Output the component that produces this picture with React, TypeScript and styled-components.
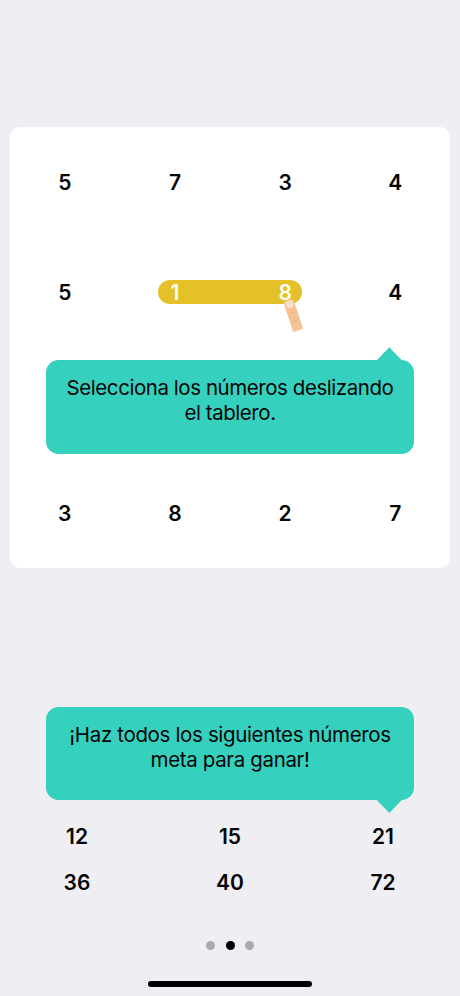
import React from 'react';
import styled, { createGlobalStyle } from 'styled-components';

const GlobalStyle = createGlobalStyle`
  * { box-sizing: border-box; }
  body { margin: 0; background: #efeef3; }
`;

const Screen = styled.main`
  display: flex;
  flex-direction: column;
  width: 460px;
  height: 996px;
  padding-top: 126.5px;
  overflow: hidden;
  background: #efeef3;
  color: #050507;
  font-family: Inter, 'Liberation Sans', sans-serif;
`;

const Board = styled.section`
  position: relative;
  display: grid;
  grid-template-columns: repeat(4, 1fr);
  grid-template-rows: repeat(4, 1fr);
  flex: none;
  width: 440.7px;
  height: 441.5px;
  margin-left: 9.7px;
  border-radius: 10px;
  background: #fff;
`;

const Cell = styled.div<{ $row: number; $col: number; $selected?: boolean }>`
  position: relative;
  grid-row: ${(p) => p.$row};
  grid-column: ${(p) => p.$col};
  display: flex;
  align-items: center;
  justify-content: center;
  padding-top: 1.5px;
  font-size: 21px;
  font-weight: 600;
  line-height: 25px;
  color: ${(p) => (p.$selected ? '#fffdf4' : 'inherit')};
`;

const Selection = styled.div`
  grid-row: 2;
  grid-column: 2 / 4;
  align-self: center;
  justify-self: center;
  width: 144px;
  height: 24.5px;
  border-radius: 13px;
  background: #e4c029;
`;

const Finger = styled.svg`
  position: absolute;
  left: 271px;
  top: 169.5px;
  width: 24px;
  height: 38px;
`;

const Bubble = styled.div<{ $arrow: 'up' | 'down' }>`
  position: relative;
  width: 367.5px;
  height: 93.5px;
  padding-top: 15px;
  border-radius: 12.5px;
  background: #36d1be;
  font-size: 20.5px;
  line-height: 25px;
  letter-spacing: ${(p) => (p.$arrow === 'up' ? '-0.44px' : '-0.35px')};
  text-align: center;
  white-space: pre-line;

  &::after {
    content: '';
    position: absolute;
    right: 11px;
    ${(p) => (p.$arrow === 'up' ? 'top: -13px;' : 'bottom: -13px;')}
    width: 27px;
    height: 14px;
    background: #36d1be;
    clip-path: ${(p) =>
      p.$arrow === 'up'
        ? 'polygon(50% 0, 100% 100%, 0 100%)'
        : 'polygon(0 0, 100% 0, 50% 100%)'};
  }
`;

const BoardHint = styled.div`
  position: absolute;
  left: 36.6px;
  top: 233.7px;
`;

const GoalHint = styled.div`
  margin: 138.5px 0 0 46.3px;
`;

const Goals = styled.section`
  display: grid;
  grid-template-columns: repeat(3, 153px);
  grid-auto-rows: 46px;
  margin-top: 13.1px;
  justify-content: center;
`;

const Goal = styled.div`
  display: flex;
  align-items: center;
  justify-content: center;
  font-size: 21px;
  font-weight: 600;
  line-height: 25px;
`;

const Pager = styled.nav`
  display: flex;
  justify-content: center;
  gap: 10.6px;
  margin-top: 35.9px;
`;

const Dot = styled.span<{ $active?: boolean }>`
  width: 9px;
  height: 9px;
  border-radius: 50%;
  background: ${(p) => (p.$active ? '#000' : '#aaaaac')};
`;

const HomeIndicator = styled.div`
  width: 164px;
  height: 5.5px;
  margin: auto auto 9.5px;
  border-radius: 3px;
  background: #000;
`;

const rows = [
  { row: 1, values: [5, 7, 3, 4] },
  { row: 2, values: [5, 1, 8, 4] },
  { row: 4, values: [3, 8, 2, 7] },
];
const goals = [12, 15, 21, 36, 40, 72];

export default function App() {
  return (
    <Screen>
      <GlobalStyle />
      <Board>
        <Selection />
        {rows.map(({ row, values }) =>
          values.map((value, i) => (
            <Cell
              key={`${row}-${i}`}
              $row={row}
              $col={i + 1}
              $selected={row === 2 && (i === 1 || i === 2)}
            >
              {value}
            </Cell>
          )),
        )}
        <Finger viewBox="0 0 24 38" aria-hidden="true">
          <g transform="translate(7.2 4) rotate(-18)">
            <path d="M-5.2 2Q-5.2 0 -3.2 0H3.2Q5.2 0 5.2 2V32H-5.2Z" fill="#f5c293" />
            <path d="M-3.6 1H3.6V5Q3.6 8.5 0 8.5Q-3.6 8.5 -3.6 5Z" fill="#fae0ce" />
            <path d="M-2.5 13.5H2.5M-3 22H3" stroke="#e3ab7e" strokeWidth="0.8" />
          </g>
        </Finger>
        <BoardHint>
          <Bubble $arrow="up">{'Selecciona los números deslizando\nel tablero.'}</Bubble>
        </BoardHint>
      </Board>
      <GoalHint>
        <Bubble $arrow="down">{'¡Haz todos los siguientes números\nmeta para ganar!'}</Bubble>
      </GoalHint>
      <Goals>
        {goals.map((goal) => (
          <Goal key={goal}>{goal}</Goal>
        ))}
      </Goals>
      <Pager>
        <Dot />
        <Dot $active />
        <Dot />
      </Pager>
      <HomeIndicator />
    </Screen>
  );
}
